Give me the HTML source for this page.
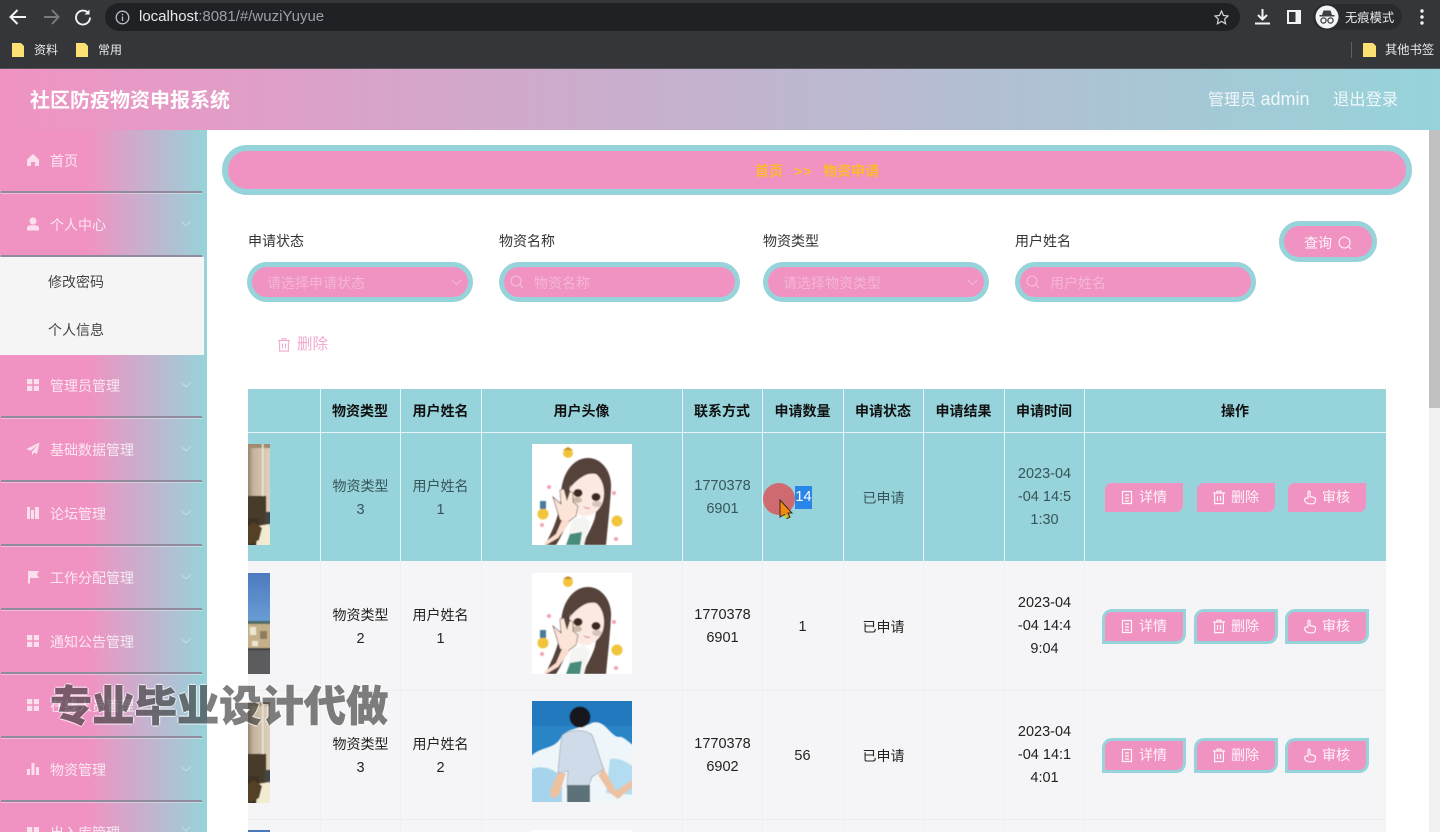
<!DOCTYPE html>
<html lang="zh-CN"><head><meta charset="utf-8"><title>社区防疫物资申报系统</title>
<style>
*{box-sizing:border-box}
html,body{margin:0;padding:0;width:1440px;height:832px;overflow:hidden;background:#fff}
body{font-family:"Liberation Sans","Noto Sans CJK SC",sans-serif;font-size:14px;color:#333}
#p{position:absolute;left:0;top:0;width:1440px;height:832px;overflow:hidden;contain:paint}
.a{position:absolute}
.t{position:absolute;white-space:nowrap;line-height:20px;transform:translateY(calc(-50% + 1px))}
.c{position:absolute;text-align:center;line-height:23px;font-size:14px;color:#222}
.n{font-size:14.5px}
.h{position:absolute;text-align:center;font-weight:700;font-size:14px;color:#111;top:389px;height:43px;line-height:45px}
.r1{color:#37555b}
.line{position:absolute;left:1px;width:201px;height:2px;background:#918b9e;box-shadow:0 1px 0 rgba(255,255,255,.35)}
.m{position:absolute;left:50px;color:rgba(255,255,255,.78);white-space:nowrap;line-height:20px;transform:translateY(calc(-50% + 1px));font-size:14px}
.ic{position:absolute;left:26px;width:14px;height:14px;fill:rgba(255,255,255,.7)}
.ch{position:absolute;left:181px;width:10px;height:6px;fill:none;stroke:rgba(255,255,255,.35);stroke-width:1}
.inp{position:absolute;top:262px;height:40px;border:5px solid #96d3da;background:#f093c3;border-radius:20px}
.ph{position:absolute;top:283px;color:rgba(255,255,255,.32);font-size:14px;line-height:20px;transform:translateY(-50%);white-space:nowrap}
.lb{position:absolute;top:241px;color:#333;font-size:14px;line-height:20px;transform:translateY(-50%);white-space:nowrap}
.b{position:absolute;background:#f093c3;border-radius:7px 0 7px 0;color:rgba(255,255,255,.9);font-size:14px;width:78px;height:29px;line-height:29px;padding-left:34px;white-space:nowrap}
.bb{box-shadow:0 0 0 3px #96d3da;border-radius:7px 0 7px 0}
.b svg{position:absolute;left:15px;top:7px;width:14px;height:15px;fill:none;stroke:rgba(255,255,255,.9);stroke-width:1.2}
.v{position:absolute;width:1px;background:#f0f0f2;top:562px;height:270px}
.vw{position:absolute;width:1px;background:#e6f5f6;top:389px;height:172px}
.im{position:absolute;left:248px;width:22px;height:101px}
.av{position:absolute;left:532px;width:100px;height:101px}
</style></head>
<body>
<div id="p">
<svg width="0" height="0" style="position:absolute">
<defs>
<filter id="s"><feGaussianBlur stdDeviation=".55"/></filter>
<linearGradient id="wall" x1="0" x2="1" y1="0" y2="0"><stop offset="0" stop-color="#7e6a55"/><stop offset=".3" stop-color="#c4b49c"/><stop offset="1" stop-color="#e2d6c4"/></linearGradient>
<linearGradient id="sky" x1="0" x2="0" y1="0" y2="1"><stop offset="0" stop-color="#4a78bd"/><stop offset="1" stop-color="#6fa3da"/></linearGradient>
<symbol id="girl" viewBox="0 0 100 101" preserveAspectRatio="none">
<rect width="100" height="101" fill="#fff"/>
<g filter="url(#s)">
<path d="M13 101 C22 84 28 70 29 50 C30 28 42 14 56 14 C70 14 80 28 79 44 C78 62 76 80 74 101 L50 101 C58 86 64 76 64 66 L38 66 C36 78 30 92 24 101Z" fill="#54433b"/>
<path d="M38 42 C44 34 56 28 64 30 C72 36 74 50 70 60 C65 70 56 74 48 71 C40 68 36 54 38 42Z" fill="#fbe9e2"/>
<path d="M38 44 C42 26 56 20 66 28 C56 28 46 34 38 44Z" fill="#54433b"/>
<ellipse cx="46" cy="49" rx="4.500" ry="4" fill="#3a2a22"/><ellipse cx="64" cy="53" rx="4.500" ry="4" fill="#3a2a22"/>
<ellipse cx="45" cy="56" rx="5" ry="3" fill="#cbb8a8"/><ellipse cx="65" cy="60" rx="5" ry="3" fill="#d8c4b8"/>
<path d="M52 63 q3 2 6 1" stroke="#d77" fill="none"/>
<path d="M21 53 L29 60 L28 46 L32 45 L35 56 L38 47 L41 49 L41 58 L46 62 L44 72 L36 78 L28 76 L25 66Z" fill="#fce4d8" stroke="#54433b" stroke-width=".6"/>
<path d="M30 76 L38 78 L26 94 L14 101 L12 99 L24 90Z" fill="#fcdccc"/>
<path d="M34 101 L40 76 L52 72 L58 78 L52 101Z" fill="#f4f4f2"/>
<path d="M34 101 L38 90 L50 88 L48 101Z" fill="#478b7a"/>
<circle cx="36" cy="9" r="5" fill="#f2c43a"/><path d="M31 6 36 3 41 6Z" fill="#c98a2c"/>
<circle cx="11" cy="70" r="5.500" fill="#f2c43a"/><circle cx="85" cy="77" r="5.500" fill="#f2c43a"/>
<rect x="8" y="57" width="6" height="8" fill="#4a7a9a"/>
<circle cx="17" cy="43" r="2" fill="#f3a3ae"/><circle cx="82" cy="49" r="2" fill="#f3a3ae"/><circle cx="10" cy="81" r="2" fill="#f3a3ae"/><circle cx="84" cy="95" r="2" fill="#f3a3ae"/>
</g>
</symbol>
<symbol id="boy" viewBox="0 0 100 101" preserveAspectRatio="none">
<rect width="100" height="101" fill="#2a85c6"/>
<g filter="url(#s)">
<rect x="-5" y="-5" width="110" height="30" fill="#2279bd"/>
<path d="M-5 60 C6 44 20 50 28 38 C34 26 50 28 60 22 C72 18 78 34 86 36 C92 34 98 44 105 46 L105 105 L-5 105Z" fill="#eef6fa"/>
<path d="M-5 70 C10 62 22 68 30 76 L30 105 L-5 105Z" fill="#a6d4ec"/>
<path d="M78 58 C88 56 96 62 105 68 L105 94 L74 92Z" fill="#b4dcf0"/>
<path d="M30 34 C38 28 54 28 60 34 C66 48 68 60 72 68 L60 76 L57 84 L35 86 L36 70 L26 72 C27 58 28 46 30 34Z" fill="#cfdbe8" stroke="#8a9aab" stroke-width=".6"/>
<circle cx="48" cy="16" r="10.500" fill="#12181c"/>
<rect x="35" y="84" width="23" height="20" fill="#5d7278"/>
<path d="M26 72 L34 72 L27 94 L20 98 L18 90Z" fill="#eec1a0"/>
<path d="M72 68 L84 90 L105 76 L105 82 L86 98 L78 92 L66 74Z" fill="#eec1a0"/>
</g>
</symbol>
<symbol id="room" viewBox="0 0 22 101" preserveAspectRatio="none">
<rect x="-3" y="-3" width="28" height="110" fill="url(#wall)"/>
<g filter="url(#s)">
<rect x="-3" y="-3" width="28" height="7" fill="#a08a70"/>
<rect x="14" y="-3" width="1.500" height="60" fill="#efe7d8"/>
<rect x="-3" y="52" width="21" height="30" fill="#4a3a2a"/>
<rect x="-3" y="74" width="14" height="30" fill="#3d3023"/>
<rect x="17" y="68" width="8" height="16" fill="#3f4644"/>
<path d="M10 82 L22 80 L25 104 L8 104Z" fill="#f3ead2"/>
<path d="M-3 84 L6 78 L14 84 L11 96 L-3 103Z" fill="#524028"/>
</g>
</symbol>
<symbol id="city" viewBox="0 0 22 101" preserveAspectRatio="none">
<rect x="-3" y="-3" width="28" height="60" fill="url(#sky)"/>
<g filter="url(#s)">
<rect x="-3" y="48" width="28" height="5" fill="#4f6d66"/>
<rect x="-3" y="51" width="28" height="26" fill="#c5b08a"/>
<rect x="2" y="54" width="6" height="8" fill="#efe7d6"/><rect x="12" y="58" width="7" height="8" fill="#8f7c60"/><rect x="4" y="68" width="6" height="5" fill="#efe7d6"/>
<rect x="-3" y="75" width="28" height="3" fill="#3a3a3c"/>
<rect x="-3" y="77" width="28" height="28" fill="#5c5c5e"/>
</g>
</symbol>
<symbol id="i-doc" viewBox="0 0 14 15"><path d="M2.500 1.500h9v12h-9zM5 5h4M5 8h4M5 11h4"/></symbol>
<symbol id="i-del" viewBox="0 0 14 15"><path d="M1 3h12M5 3V1.200h4V3M2.600 3v10.600h8.800V3M5.500 6v5M8.500 6v5"/></symbol>
<symbol id="i-hand" viewBox="0 0 14 15"><path d="M5 8V2.200c0-1.400 2-1.400 2 0V6.500l4 1c1.600.5 1.700 1.500 1.500 2.700-.3 2-1 3.600-2.500 3.600H6C4 13.800 1.500 11.500 1.500 9.800 1.500 8.400 3.500 7.600 5 8z"/></symbol>
<symbol id="i-grid" viewBox="0 0 14 14"><rect x="1" y="1" width="5.200" height="5.200"/><rect x="7.800" y="1" width="5.200" height="5.200"/><rect x="1" y="7.800" width="5.200" height="5.200"/><rect x="7.800" y="7.800" width="5.200" height="5.200"/></symbol>
<symbol id="i-ch" viewBox="0 0 10 6"><path d="M.5.500 5 5 9.500.500"/></symbol>
</defs>
</svg>

<!-- browser chrome -->
<div class="a" style="left:0;top:0;width:1440px;height:69px;background:#35363a;border-bottom:1px solid #55565a"></div>
<div class="a" style="left:105px;top:3px;width:1135px;height:28px;border-radius:14px;background:#202124"></div>
<svg class="a" style="left:8px;top:7px" width="90" height="20" fill="none" stroke-width="2">
<path d="M18 10H3M9.500 3 2.500 10 9.500 17" stroke="#f1f3f4"/>
<path d="M36 10H50M44 3 50.500 10 44 17" stroke="#7a7b7e"/>
</svg>
<svg class="a" style="left:74px;top:8px" width="18" height="18" fill="none" stroke="#f1f3f4" stroke-width="1.900"><path d="M14.500 5.200A7 7 0 1 0 16 9.500"/><path d="M15.500 1.500v5h-5z" fill="#f1f3f4" stroke="none"/></svg>
<svg class="a" style="left:115px;top:10px" width="15" height="15" fill="none" stroke="#bdc1c6" stroke-width="1.300"><circle cx="7.500" cy="7.500" r="6.300"/><path d="M7.500 6.500v4.500M7.500 3.800v1.400"/></svg>
<div class="t" style="left:139px;top:16px;font-size:15px;color:#e8eaed">localhost<span style="color:#9aa0a6">:8081/#/wuziYuyue</span></div>
<svg class="a" style="left:1214px;top:10px" width="15" height="15" fill="none" stroke="#d5d7da" stroke-width="1.200"><path d="M7.500 1 9.500 5.500 14 6 10.700 9.100 11.600 13.800 7.500 11.400 3.400 13.800 4.300 9.100 1 6 5.500 5.500Z"/></svg>
<svg class="a" style="left:1254px;top:8px" width="17" height="17" fill="none" stroke="#f1f3f4" stroke-width="2"><path d="M8.500 1v10M4 7l4.500 4.500L13 7M1 15.500h15"/></svg>
<svg class="a" style="left:1287px;top:10px" width="14" height="14"><path d="M0 0h14v14H0z" fill="#f1f3f4"/><rect x="2" y="2" width="6.500" height="10" fill="#35363a"/></svg>
<div class="a" style="left:1313px;top:4px;width:89px;height:26px;border-radius:13px;background:#2a2b2f"></div>
<svg class="a" style="left:1315px;top:5px" width="24" height="24"><circle cx="12" cy="12" r="11.500" fill="#f1f3f4"/><path d="M7 10 8.500 5.500h7L17 10z" fill="#3c4043"/><rect x="4.500" y="10" width="15" height="1.500" fill="#3c4043"/><circle cx="8.500" cy="15.500" r="2.600" fill="none" stroke="#3c4043" stroke-width="1.300"/><circle cx="15.500" cy="15.500" r="2.600" fill="none" stroke="#3c4043" stroke-width="1.300"/></svg>
<div class="t" style="left:1345px;top:17px;font-size:12.300px;color:#e8eaed">无痕模式</div>
<svg class="a" style="left:1420px;top:9px" width="4" height="16" fill="#f1f3f4"><circle cx="2" cy="2" r="1.700"/><circle cx="2" cy="8" r="1.700"/><circle cx="2" cy="14" r="1.700"/></svg>
<svg class="a" style="left:12px;top:43px" width="12" height="14"><path d="M0 0h9l3 3v11H0z" fill="#fde074"/></svg>
<div class="t" style="left:34px;top:49px;font-size:12px;color:#e8eaed">资料</div>
<svg class="a" style="left:76px;top:43px" width="12" height="14"><path d="M0 0h9l3 3v11H0z" fill="#fde074"/></svg>
<div class="t" style="left:98px;top:49px;font-size:12px;color:#e8eaed">常用</div>
<div class="a" style="left:1351px;top:42px;width:1px;height:16px;background:#5f6063"></div>
<svg class="a" style="left:1363px;top:43px" width="13" height="14"><path d="M0 0h10l3 3v11H0z" fill="#fde074"/></svg>
<div class="t" style="left:1385px;top:49px;font-size:12.300px;color:#e8eaed">其他书签</div>

<!-- header -->
<div class="a" style="left:0;top:69px;width:1440px;height:61px;background:linear-gradient(90deg,#f093c3,#96d3da)"></div>
<div class="t" style="left:30px;top:100px;font-size:20px;font-weight:700;color:#fff">社区防疫物资申报系统</div>
<div class="t" style="left:1208px;top:99px;font-size:16px;color:rgba(255,255,255,.85)">管理员 <span style="font-size:18px">admin</span></div>
<div class="t" style="left:1333px;top:99px;font-size:16.300px;color:rgba(255,255,255,.85)">退出登录</div>

<!-- sidebar -->
<div class="a" style="left:0;top:130px;width:207px;height:702px;background:linear-gradient(90deg,#f093c3 0,#f093c3 90px,#96d3da 207px)"></div>
<div class="a" style="left:0;top:257px;width:204px;height:98px;background:#f5f5f6"></div>
<div class="line" style="top:191px"></div><div class="line" style="top:255px"></div><div class="line" style="top:416px"></div><div class="line" style="top:480px"></div><div class="line" style="top:544px"></div><div class="line" style="top:608px"></div><div class="line" style="top:672px"></div><div class="line" style="top:736px"></div><div class="line" style="top:800px"></div>

<svg class="ic" style="top:153px" viewBox="0 0 14 14"><path d="M7 1 1 6.500V13h4V9h4v4h4V6.500z"/></svg>
<svg class="ic" style="top:217px" viewBox="0 0 14 14"><circle cx="7" cy="4" r="3.500"/><path d="M1 13.500V11c0-2 2-2.800 6-2.800s6 .8 6 2.800v2.500z"/></svg>
<svg class="ic" style="top:378px"><use href="#i-grid"/></svg>
<svg class="ic" style="top:442px" viewBox="0 0 14 14"><path d="M13.500.5 .5 7l4 1.800L11 3.500 6 9.800V13.500L8 10.500 11 12z"/></svg>
<svg class="ic" style="top:506px" viewBox="0 0 14 14"><path d="M1 1h3v12H1zM5 4h3v9H5zM9 1h4v12H9z"/></svg>
<svg class="ic" style="top:570px" viewBox="0 0 14 14"><path d="M2 1h11l-2 3.500 2 3.500H4v5.500H2z"/></svg>
<svg class="ic" style="top:634px"><use href="#i-grid"/></svg>
<svg class="ic" style="top:698px"><use href="#i-grid"/></svg>
<svg class="ic" style="top:762px" viewBox="0 0 14 14"><path d="M1 7h3v6H1zM5.500 1h3v12h-3zM10 5h3v8h-3z"/></svg>
<svg class="a" style="left:26px;top:826px;width:14px;height:6px;fill:rgba(255,255,255,.7)" viewBox="0 0 14 6"><rect x="1" y="1" width="5.200" height="5"/><rect x="7.800" y="1" width="5.200" height="5"/></svg>

<div class="m" style="top:160px">首页</div>
<div class="m" style="top:224px">个人中心</div>
<div class="t" style="left:48px;top:281px;color:#444">修改密码</div>
<div class="t" style="left:48px;top:329px;color:#444">个人信息</div>
<div class="m" style="top:385px">管理员管理</div>
<div class="m" style="top:449px">基础数据管理</div>
<div class="m" style="top:513px">论坛管理</div>
<div class="m" style="top:577px">工作分配管理</div>
<div class="m" style="top:641px">通知公告管理</div>
<div class="m" style="top:705px">在线人员管理</div>
<div class="m" style="top:769px">物资管理</div>
<div class="a" style="left:50px;top:823px;height:9px;width:90px;overflow:hidden;color:rgba(255,255,255,.78);font-size:14px;line-height:20px;white-space:nowrap">出入库管理</div>
<svg class="ch" style="top:221px"><use href="#i-ch"/></svg>
<svg class="ch" style="top:382px"><use href="#i-ch"/></svg>
<svg class="ch" style="top:446px"><use href="#i-ch"/></svg>
<svg class="ch" style="top:510px"><use href="#i-ch"/></svg>
<svg class="ch" style="top:574px"><use href="#i-ch"/></svg>
<svg class="ch" style="top:638px"><use href="#i-ch"/></svg>
<svg class="ch" style="top:702px"><use href="#i-ch"/></svg>
<svg class="ch" style="top:766px"><use href="#i-ch"/></svg>
<svg class="ch" style="top:826px"><use href="#i-ch"/></svg>

<!-- scrollbar -->
<div class="a" style="left:1429px;top:130px;width:11px;height:702px;background:#f1f1f1"></div>
<div class="a" style="left:1429px;top:130px;width:11px;height:278px;background:#c1c1c1"></div>

<!-- breadcrumb -->
<div class="a" style="left:222px;top:145px;width:1190px;height:50px;border:6px solid #96d3da;border-radius:25px;background:#f093c3"></div>
<div class="t" style="left:755px;top:170px;font-size:14px;font-weight:700;color:#fdb92e">首页</div>
<div class="t" style="left:794px;top:170px;font-size:14px;font-weight:700;color:#fdb92e;letter-spacing:1px">&gt;&gt;</div>
<div class="t" style="left:823px;top:170px;font-size:14px;font-weight:700;color:#fdb92e">物资申请</div>

<!-- search -->
<div class="lb" style="left:248px">申请状态</div><div class="lb" style="left:499px">物资名称</div><div class="lb" style="left:763px">物资类型</div><div class="lb" style="left:1015px">用户姓名</div>
<div class="inp" style="left:247px;width:226px"></div>
<div class="inp" style="left:499px;width:241px"></div>
<div class="inp" style="left:763px;width:226px"></div>
<div class="inp" style="left:1015px;width:241px"></div>
<div class="ph" style="left:267px">请选择申请状态</div>
<div class="ph" style="left:534px">物资名称</div>
<div class="ph" style="left:783px">请选择物资类型</div>
<div class="ph" style="left:1050px">用户姓名</div>
<svg class="a" style="left:451px;top:279px" width="11" height="7" fill="none" stroke="rgba(255,255,255,.35)"><path d="M1 1l4.500 4.500L10 1"/></svg>
<svg class="a" style="left:967px;top:279px" width="11" height="7" fill="none" stroke="rgba(255,255,255,.35)"><path d="M1 1l4.500 4.500L10 1"/></svg>
<svg class="a" style="left:510px;top:275px" width="14" height="14" fill="none" stroke="rgba(255,255,255,.4)" stroke-width="1.100"><circle cx="6" cy="6" r="5"/><path d="M10 10l3 3"/></svg>
<svg class="a" style="left:1026px;top:275px" width="14" height="14" fill="none" stroke="rgba(255,255,255,.4)" stroke-width="1.100"><circle cx="6" cy="6" r="5"/><path d="M10 10l3 3"/></svg>
<div class="a" style="left:1279px;top:221px;width:98px;height:41px;border:5px solid #96d3da;border-radius:21px;background:#f093c3"></div>
<div class="t" style="left:1304px;top:242px;color:rgba(255,255,255,.9);font-size:14px">查询</div>
<svg class="a" style="left:1338px;top:236px" width="14" height="14" fill="none" stroke="rgba(255,255,255,.85)" stroke-width="1.100"><circle cx="6.500" cy="6.500" r="5.500"/><path d="M10.500 10.500l2.500 2.500"/></svg>
<svg class="a" style="left:277px;top:337px" width="14" height="16" fill="none" stroke="#f2a9cf" stroke-width="1.100" viewBox="0 0 14 15"><use href="#i-del"/></svg>
<div class="t" style="left:297px;top:344px;font-size:15.500px;color:#f2a9cf">删除</div>

<!-- table -->
<div class="a" style="left:248px;top:389px;width:1138px;height:172px;background:#96d3da"></div>
<div class="a" style="left:248px;top:432px;width:1138px;height:1px;background:#e6f5f6"></div>
<div class="a" style="left:248px;top:561px;width:1138px;height:271px;background:#f5f5f7"></div>
<div class="a" style="left:248px;top:690px;width:1138px;height:1px;background:#eeeef0"></div>
<div class="a" style="left:248px;top:819px;width:1138px;height:1px;background:#eeeef0"></div>
<div class="vw" style="left:320px"></div><div class="vw" style="left:400px"></div><div class="vw" style="left:481px"></div><div class="vw" style="left:682px"></div><div class="vw" style="left:762px"></div><div class="vw" style="left:843px"></div><div class="vw" style="left:923px"></div><div class="vw" style="left:1004px"></div><div class="vw" style="left:1084px"></div>
<div class="v" style="left:320px"></div><div class="v" style="left:400px"></div><div class="v" style="left:481px"></div><div class="v" style="left:682px"></div><div class="v" style="left:762px"></div><div class="v" style="left:843px"></div><div class="v" style="left:923px"></div><div class="v" style="left:1004px"></div><div class="v" style="left:1084px"></div>

<div class="h" style="left:320px;width:80px">物资类型</div>
<div class="h" style="left:400px;width:81px">用户姓名</div>
<div class="h" style="left:481px;width:201px">用户头像</div>
<div class="h" style="left:682px;width:80px">联系方式</div>
<div class="h" style="left:762px;width:81px">申请数量</div>
<div class="h" style="left:843px;width:80px">申请状态</div>
<div class="h" style="left:923px;width:81px">申请结果</div>
<div class="h" style="left:1004px;width:80px">申请时间</div>
<div class="h" style="left:1084px;width:302px">操作</div>

<svg class="im" style="top:444px"><use href="#room" width="22" height="101"/></svg>
<svg class="im" style="top:573px"><use href="#city" width="22" height="101"/></svg>
<svg class="im" style="top:702px"><use href="#room" width="22" height="101"/></svg>
<svg class="a" style="left:248px;top:830px;width:22px;height:2px"><rect width="22" height="2" fill="#4a78bd"/></svg>
<svg class="av" style="top:444px"><use href="#girl" width="100" height="101"/></svg>
<svg class="av" style="top:573px"><use href="#girl" width="100" height="101"/></svg>
<svg class="av" style="top:701px"><use href="#boy" width="100" height="101"/></svg>
<div class="a" style="left:532px;top:830px;width:100px;height:2px;background:#fff"></div>

<!-- row 1 -->
<div class="c r1" style="left:320px;top:475px;width:81px">物资类型<br><span class="n">3</span></div>
<div class="c r1" style="left:400px;top:475px;width:81px">用户姓名<br><span class="n">1</span></div>
<div class="c r1 n" style="left:682px;top:475px;width:81px">1770378<br>6901</div>
<div class="a" style="left:795px;top:486px;width:17px;height:23px;background:#2a85e8;color:#fff;text-align:center;line-height:23px;font-size:14.500px">14</div>
<div class="c r1" style="left:843px;top:487px;width:81px">已申请</div>
<div class="c r1 n" style="left:1004px;top:463px;width:81px">2023-04<br>-04 14:5<br>1:30</div>
<!-- row 2 -->
<div class="c" style="left:320px;top:604px;width:81px">物资类型<br><span class="n">2</span></div>
<div class="c" style="left:400px;top:604px;width:81px">用户姓名<br><span class="n">1</span></div>
<div class="c n" style="left:682px;top:604px;width:81px">1770378<br>6901</div>
<div class="c n" style="left:762px;top:616px;width:81px">1</div>
<div class="c" style="left:843px;top:616px;width:81px">已申请</div>
<div class="c n" style="left:1004px;top:592px;width:81px">2023-04<br>-04 14:4<br>9:04</div>
<!-- row 3 -->
<div class="c" style="left:320px;top:733px;width:81px">物资类型<br><span class="n">3</span></div>
<div class="c" style="left:400px;top:733px;width:81px">用户姓名<br><span class="n">2</span></div>
<div class="c n" style="left:682px;top:733px;width:81px">1770378<br>6902</div>
<div class="c n" style="left:762px;top:745px;width:81px">56</div>
<div class="c" style="left:843px;top:745px;width:81px">已申请</div>
<div class="c n" style="left:1004px;top:721px;width:81px">2023-04<br>-04 14:1<br>4:01</div>

<!-- buttons -->
<div class="b" style="left:1105px;top:483px"><svg><use href="#i-doc"/></svg>详情</div>
<div class="b" style="left:1197px;top:483px"><svg><use href="#i-del"/></svg>删除</div>
<div class="b" style="left:1288px;top:483px"><svg><use href="#i-hand"/></svg>审核</div>
<div class="b bb" style="left:1105px;top:612px"><svg><use href="#i-doc"/></svg>详情</div>
<div class="b bb" style="left:1197px;top:612px"><svg><use href="#i-del"/></svg>删除</div>
<div class="b bb" style="left:1288px;top:612px"><svg><use href="#i-hand"/></svg>审核</div>
<div class="b bb" style="left:1105px;top:741px"><svg><use href="#i-doc"/></svg>详情</div>
<div class="b bb" style="left:1197px;top:741px"><svg><use href="#i-del"/></svg>删除</div>
<div class="b bb" style="left:1288px;top:741px"><svg><use href="#i-hand"/></svg>审核</div>

<!-- cursor highlight -->
<div class="a" style="left:763px;top:483px;width:32px;height:32px;border-radius:50%;background:#cf6b70"></div>
<svg class="a" style="left:779px;top:499px" width="16" height="21"><path d="M1 1 13 14H9L11 18 8 19.500 5.500 15.500 1 18Z" fill="#f08a10" stroke="#3a2a10" stroke-width="1"/><circle cx="7" cy="17.500" r="1.800" fill="#b5d334"/></svg>

<!-- watermark -->
<div class="t" style="left:50px;top:706px;font-size:42.300px;font-weight:900;line-height:50px;color:#3c3c3c;opacity:.65;-webkit-text-stroke:.6px #3c3c3c;text-shadow:1.500px 0 0 #fff,-1.500px 0 0 #fff,0 1.500px 0 #fff,0 -1.500px 0 #fff">专业毕业设计代做</div>
</div>
</body></html>
